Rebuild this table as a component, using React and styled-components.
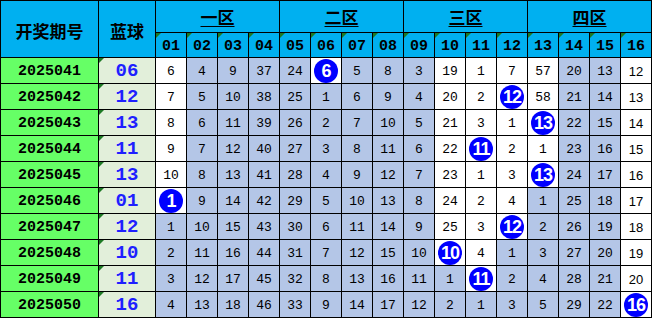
import React from "react";
import styled, { createGlobalStyle, css } from "styled-components";

const GlobalStyle = createGlobalStyle`
  html, body {
    margin: 0;
    padding: 0;
    background: #fff;
  }
`;

const zones = ["一区", "二区", "三区", "四区"];

// w = white cell, b = blue cell, o = drawn ball
const rows = [
  { period: "2025041", blue: "06", mask: "wbbbbobbbwwwwbbw", nums: [6, 4, 9, 37, 24, 6, 5, 8, 3, 19, 1, 7, 57, 20, 13, 12] },
  { period: "2025042", blue: "12", mask: "wbbbbbbbbwwowbbw", nums: [7, 5, 10, 38, 25, 1, 6, 9, 4, 20, 2, 12, 58, 21, 14, 13] },
  { period: "2025043", blue: "13", mask: "wbbbbbbbbwwwobbw", nums: [8, 6, 11, 39, 26, 2, 7, 10, 5, 21, 3, 1, 13, 22, 15, 14] },
  { period: "2025044", blue: "11", mask: "wbbbbbbbbwowwbbw", nums: [9, 7, 12, 40, 27, 3, 8, 11, 6, 22, 11, 2, 1, 23, 16, 15] },
  { period: "2025045", blue: "13", mask: "wbbbbbbbbwwwobbw", nums: [10, 8, 13, 41, 28, 4, 9, 12, 7, 23, 1, 3, 13, 24, 17, 16] },
  { period: "2025046", blue: "01", mask: "obbbbbbbbwwwbbbw", nums: [1, 9, 14, 42, 29, 5, 10, 13, 8, 24, 2, 4, 1, 25, 18, 17] },
  { period: "2025047", blue: "12", mask: "bbbbbbbbbwwobbbw", nums: [1, 10, 15, 43, 30, 6, 11, 14, 9, 25, 3, 12, 2, 26, 19, 18] },
  { period: "2025048", blue: "10", mask: "bbbbbbbbbowbbbbw", nums: [2, 11, 16, 44, 31, 7, 12, 15, 10, 10, 4, 1, 3, 27, 20, 19] },
  { period: "2025049", blue: "11", mask: "bbbbbbbbbbobbbbw", nums: [3, 12, 17, 45, 32, 8, 13, 16, 11, 1, 11, 2, 4, 28, 21, 20] },
  { period: "2025050", blue: "16", mask: "bbbbbbbbbbbbbbbo", nums: [4, 13, 18, 46, 33, 9, 14, 17, 12, 2, 1, 3, 5, 29, 22, 16] },
];

const cols = Array.from({ length: 16 }, (_, i) => String(i + 1).padStart(2, "0"));

const marker = css`
  position: relative;
  &::before {
    content: "";
    position: absolute;
    top: 0;
    left: 0;
    border-top: 5px solid #1d7a24;
    border-right: 5px solid transparent;
  }
`;

const Sheet = styled.div`
  display: grid;
  grid-template-columns: 97px 56px repeat(16, 30px);
  grid-template-rows: 31px 24px repeat(10, 25px);
  gap: 1px;
  padding: 1px;
  width: max-content;
  background: #000;
`;

const Cell = styled.div`
  display: flex;
  align-items: center;
  justify-content: center;
  overflow: hidden;
`;

const TitleCell = styled(Cell)`
  grid-row: span 2;
  background: #00b0f0;
  color: #000;
  font-family: "Noto Sans CJK SC", sans-serif;
  font-weight: 700;
  font-size: 17px;
  padding-top: 3px;
`;

const ZoneCell = styled(Cell)`
  grid-column: span 4;
  background: #00b0f0;
  color: #000;
  font-family: "Noto Sans CJK SC", sans-serif;
  font-weight: 700;
  font-size: 17px;
  text-decoration: underline;
  text-underline-offset: 2px;
`;

const NumHead = styled(Cell)`
  ${marker}
  background: #00b0f0;
  font-family: "Liberation Mono", monospace;
  font-weight: 700;
  font-size: 15px;
  padding-top: 2px;
`;

const PeriodCell = styled(Cell)`
  background: #66ff66;
  font-family: "Liberation Mono", monospace;
  font-weight: 700;
  font-size: 15px;
  padding-top: 1px;
`;

const BlueCell = styled(Cell)`
  ${marker}
  background: #e2efda;
  color: #1f1fff;
  font-family: "Liberation Mono", monospace;
  font-weight: 700;
  font-size: 19px;
  padding-top: 1px;
`;

const DataCell = styled(Cell)`
  background: ${(p) => (p.$white ? "#fff" : "#b4c6e7")};
  color: #000;
  font-family: ${(p) => (p.$last ? '"Liberation Sans", sans-serif' : '"Liberation Mono", monospace')};
  font-size: 13px;
  padding-top: 1px;
`;

const Ball = styled.span`
  display: flex;
  align-items: center;
  justify-content: center;
  width: 24px;
  height: 24px;
  border-radius: 50%;
  background: #0000ff;
  color: #fff;
  font-family: "Liberation Sans", sans-serif;
  font-weight: 700;
  font-size: 18px;
  letter-spacing: -1px;
`;

export default function App() {
  return (
    <>
      <GlobalStyle />
      <Sheet>
        <TitleCell>开奖期号</TitleCell>
        <TitleCell>蓝球</TitleCell>
        {zones.map((z) => (
          <ZoneCell key={z}>{z}</ZoneCell>
        ))}
        {cols.map((c) => (
          <NumHead key={c}>{c}</NumHead>
        ))}
        {rows.map((r) => (
          <React.Fragment key={r.period}>
            <PeriodCell>{r.period}</PeriodCell>
            <BlueCell>{r.blue}</BlueCell>
            {r.nums.map((n, i) => {
              const kind = r.mask[i];
              return (
                <DataCell key={i} $white={kind !== "b"} $last={i === 15}>
                  {kind === "o" ? <Ball>{n}</Ball> : n}
                </DataCell>
              );
            })}
          </React.Fragment>
        ))}
      </Sheet>
    </>
  );
}
